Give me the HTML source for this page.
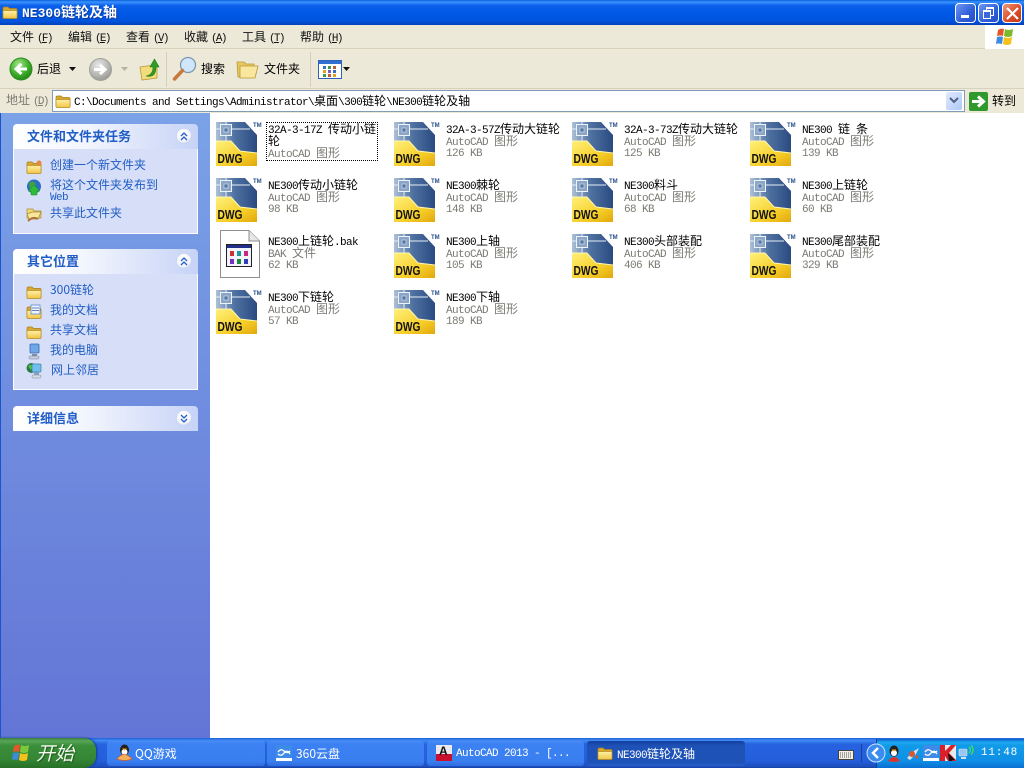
<!DOCTYPE html>
<html lang="zh"><head><meta charset="utf-8"><title>NE300链轮及轴</title>
<style>
html,body{margin:0;padding:0;width:1024px;height:768px;overflow:hidden;background:#fff}
body{position:relative;font:11px/12px "Liberation Mono","WenQuanYi Zen Hei","Noto Sans CJK SC",monospace;letter-spacing:-.6px;color:#000}
div,svg,span.a{position:absolute}
b.c,span.c{font:12px/12px "WenQuanYi Zen Hei","Noto Sans CJK SC",sans-serif;letter-spacing:0}
.s{white-space:nowrap}
.g{color:#7b7b74}
.t{white-space:nowrap;height:12px}
.k{margin-top:1px}
.m{top:31px;white-space:nowrap;color:#111}
.p{letter-spacing:-1.7px;margin-left:3px}
.lk{left:50px;color:#215dc6;white-space:nowrap;height:12px}
.hd{left:13px;width:185px;height:25px;border-radius:4px 4px 0 0;background:linear-gradient(90deg,#fff 0%,#f2f5fd 40%,#c6d3f7 100%)}
.hd b{position:absolute;left:14px;top:4px;font:bold 13px/15px "WenQuanYi Zen Hei","Noto Sans CJK SC",sans-serif;letter-spacing:0;color:#215dc6;white-space:nowrap}
.bd{left:13px;width:183px;background:#d6dff7;border:1px solid #fff;border-top:0}
.tb{top:741px;height:25px;width:158px;border-radius:3px;background:linear-gradient(180deg,#4a8cf6 0%,#3c81f3 12%,#3a7ff0 80%,#2f6de0 100%);color:#fff}
.tb .x{position:absolute;top:7px;white-space:nowrap;height:12px;color:#fff}
.wb{top:3px;width:19px;height:18px;border:1px solid #fff;border-radius:4px;box-sizing:content-box}
</style></head>
<body>
<svg width="0" height="0" style="left:0;top:0"><defs>
<linearGradient id="bl" x1="0" y1="0" x2="1" y2="0"><stop offset="0" stop-color="#aec0d6"/><stop offset=".45" stop-color="#4f72a2"/><stop offset="1" stop-color="#2a4a80"/></linearGradient>
<linearGradient id="ye" x1="0" y1="0" x2="1" y2="1"><stop offset="0" stop-color="#fff07a"/><stop offset=".6" stop-color="#f6cf2a"/><stop offset="1" stop-color="#e2a80c"/></linearGradient>
<linearGradient id="fo" x1="0" y1="0" x2="0" y2="1"><stop offset="0" stop-color="#fff2a8"/><stop offset="1" stop-color="#f0c444"/></linearGradient>
<radialGradient id="gr" cx=".4" cy=".3" r=".8"><stop offset="0" stop-color="#a5e68a"/><stop offset=".55" stop-color="#3fae2a"/><stop offset="1" stop-color="#1a7d12"/></radialGradient>
<radialGradient id="gy" cx=".4" cy=".3" r=".8"><stop offset="0" stop-color="#e8e8e8"/><stop offset=".6" stop-color="#b4b4b0"/><stop offset="1" stop-color="#8f8f8a"/></radialGradient>
<radialGradient id="cv" cx=".4" cy=".3" r=".8"><stop offset="0" stop-color="#fff"/><stop offset=".7" stop-color="#f2f4fb"/><stop offset="1" stop-color="#b8c6ee"/></radialGradient>
<symbol id="dwg" viewBox="0 0 46 46">
<path d="M0 1H29L41 14V45H0Z" fill="url(#bl)"/>
<path d="M0 20H15L24 30L41 32V45H0Z" fill="url(#ye)"/>
<path d="M0 20H15L24 30L41 32" fill="none" stroke="#fff6b0"/>
<path d="M0 8H34M10 0V20" stroke="#e6edf5" stroke-width="1" fill="none"/>
<rect x="4.500" y="3.500" width="11" height="11" fill="#8aa5c6" stroke="#eef3f8"/>
<rect x="8" y="7" width="4" height="4" fill="#5575a5" stroke="#dde6f0" stroke-width=".6"/>
</symbol>
<symbol id="fd" viewBox="0 0 16 16">
<path d="M1 4.500Q1 3 2.500 3H6L7.500 4.500H14Q15 4.500 15 5.500V13.500H1Z" fill="#d8a92f" stroke="#a77d1c" stroke-width=".7"/>
<path d="M1 6.500H15V13.500Q15 14.500 14 14.500H2Q1 14.500 1 13.500Z" fill="url(#fo)" stroke="#b68c26" stroke-width=".7"/>
</symbol>
<symbol id="tg" viewBox="0 0 16 16"><circle cx="8" cy="8" r="7.500" fill="url(#cv)" stroke="#c5d0ee" stroke-width=".6"/></symbol>
</defs></svg>

<!-- title bar -->
<div style="left:0;top:0;width:1024px;height:25px;background:linear-gradient(180deg,#0a5fd8 0%,#3a93ff 8%,#0a60ea 22%,#0058e6 55%,#0053dc 85%,#0340b8 100%)"></div>
<svg style="left:2px;top:4px" width="16" height="16"><use href="#fd"/></svg>
<div class="s" style="left:22px;top:5px;height:14px;color:#fff;font:bold 13px/14px 'Liberation Mono',monospace;letter-spacing:0;text-shadow:1px 1px 0 #0f3a9c">NE300<b class="c" style="font:bold 14px/14px 'WenQuanYi Zen Hei','Noto Sans CJK SC',sans-serif">链轮及轴</b></div>
<div class="wb" style="left:955px;background:linear-gradient(135deg,#6f96f0,#2f5fd8 60%,#2350c8)"><div style="left:5px;top:11px;width:8px;height:3px;background:#fff"></div></div>
<div class="wb" style="left:978px;background:linear-gradient(135deg,#6f96f0,#2f5fd8 60%,#2350c8)"><div style="left:7px;top:3px;width:6px;height:6px;border:1.500px solid #fff;border-top-width:2px"></div><div style="left:4px;top:6px;width:6px;height:6px;border:1.500px solid #fff;border-top-width:2px;background:#3a68dc"></div></div>
<div class="wb" style="left:1002px;width:18px;background:linear-gradient(135deg,#ec9a80,#dd4d2a 55%,#c23412)"><svg style="left:3px;top:3px" width="13" height="13"><path d="M1 1L12 12M12 1L1 12" stroke="#fff" stroke-width="2.200"/></svg></div>

<!-- menu -->
<div style="left:0;top:25px;width:1024px;height:24px;background:#ece9d8;border-bottom:1px solid #d8d2bd;box-sizing:border-box"></div>
<div class="m" style="left:10px"><span class="c">文件</span><span class="p">(<u>F</u>)</span></div>
<div class="m" style="left:68px"><span class="c">编辑</span><span class="p">(<u>E</u>)</span></div>
<div class="m" style="left:126px"><span class="c">查看</span><span class="p">(<u>V</u>)</span></div>
<div class="m" style="left:184px"><span class="c">收藏</span><span class="p">(<u>A</u>)</span></div>
<div class="m" style="left:242px"><span class="c">工具</span><span class="p">(<u>T</u>)</span></div>
<div class="m" style="left:300px"><span class="c">帮助</span><span class="p">(<u>H</u>)</span></div>
<div style="left:985px;top:25px;width:39px;height:24px;background:#fff"></div>
<svg style="left:995px;top:27px" width="20" height="20"><path d="M3 3Q6 1 9 2L8 9Q5 8 2 9Z" fill="#e5552a"/><path d="M10 2Q13 4 18 2L17 9Q13 11 9 9Z" fill="#7cb82c"/><path d="M2 10Q5 9 8 10L7 17Q4 16 1 17Z" fill="#3c8be0"/><path d="M9 10Q13 12 17 10L16 17Q12 19 8 17Z" fill="#f5c21b"/></svg>

<!-- toolbar -->
<div style="left:0;top:49px;width:1024px;height:40px;background:#ece9d8;border-bottom:1px solid #d8d2bd;box-sizing:border-box"></div>
<svg style="left:9px;top:57px" width="24" height="24"><circle cx="12" cy="12" r="11" fill="url(#gr)" stroke="#2a8c1e"/><path d="M18 12H9M12.500 7L7 12L12.500 17" stroke="#fff" stroke-width="3" fill="none"/></svg>
<div class="t" style="left:37px;top:63px"><span class="c">后退</span></div>
<svg style="left:69px;top:67px" width="8" height="5"><path d="M0 0H7L3.500 4Z" fill="#111"/></svg>
<svg style="left:89px;top:58px" width="23" height="23"><circle cx="11.500" cy="11.500" r="11" fill="url(#gy)" stroke="#a0a09b"/><path d="M5 11.500H14M11 7L16 11.500L11 16" stroke="#fff" stroke-width="3" fill="none"/></svg>
<svg style="left:121px;top:67px" width="8" height="5"><path d="M0 0H7L3.500 4Z" fill="#b5b3a7"/></svg>
<svg style="left:139px;top:57px" width="21" height="24"><path d="M1 10L8 9L18 8V21L3 23Z" fill="#f3dc7c" stroke="#b89a35" stroke-width=".8"/><path d="M7 19Q14 18 14 10H11L15.500 2L20 10H17Q17 21 7 19Z" fill="#2f9c25" stroke="#1e7a17" stroke-width=".6"/></svg>
<div style="left:166px;top:52px;width:1px;height:35px;background:#d3cfbc"></div>
<svg style="left:172px;top:56px" width="25" height="26"><circle cx="16" cy="9" r="7.500" fill="#cfe6fb" stroke="#7f96ad" stroke-width="1.300"/><path d="M10.500 14.500L2.500 23" stroke="#c8793e" stroke-width="3.500" stroke-linecap="round"/></svg>
<div class="t" style="left:201px;top:63px"><span class="c">搜索</span></div>
<svg style="left:236px;top:59px" width="23" height="21"><path d="M1 3H8L10 5H18V18H2Z" fill="#e9c862" stroke="#b89630" stroke-width=".8"/><path d="M4 7H22L19 19H4Z" fill="#f9e7a0" stroke="#b89630" stroke-width=".8"/></svg>
<div class="t" style="left:264px;top:63px"><span class="c">文件夹</span></div>
<div style="left:310px;top:52px;width:1px;height:35px;background:#d3cfbc"></div>
<svg style="left:318px;top:60px" width="24" height="19"><rect x=".5" y=".5" width="23" height="18" fill="#fff" stroke="#2c62b8"/><rect x="1" y="1" width="22" height="3" fill="#2f6fd0"/><g fill="#3c6fc2"><rect x="5" y="6" width="3" height="3"/></g><rect x="10" y="6" width="3" height="3" fill="#3c9c3c"/><rect x="15" y="6" width="3" height="3" fill="#c25a3c"/><rect x="5" y="10" width="3" height="3" fill="#e0a020"/><rect x="10" y="10" width="3" height="3" fill="#7a5cc0"/><rect x="15" y="10" width="3" height="3" fill="#3c6fc2"/><rect x="5" y="14" width="3" height="3" fill="#3c9c3c"/><rect x="10" y="14" width="3" height="3" fill="#c25a3c"/><rect x="15" y="14" width="3" height="3" fill="#e0a020"/></svg>
<svg style="left:343px;top:67px" width="8" height="5"><path d="M0 0H7L3.500 4Z" fill="#111"/></svg>

<!-- address -->
<div style="left:0;top:89px;width:1024px;height:24px;background:#ece9d8"></div>
<div class="t g" style="left:6px;top:94px;color:#7c7c72"><span class="c">地址</span><span class="p">(<u>D</u>)</span></div>
<div style="left:52px;top:90px;width:911px;height:20px;background:#fff;border:1px solid #7f9db9"></div>
<svg style="left:55px;top:93px" width="16" height="16"><use href="#fd"/></svg>
<div class="s" style="left:74px;top:95px;height:12px">C:\Documents and Settings\Administrator\<span class="c">桌面</span>\300<span class="c">链轮</span>\NE300<span class="c">链轮及轴</span></div>
<div style="left:946px;top:92px;width:16px;height:18px;border-radius:2px;background:linear-gradient(135deg,#e1eafe,#aec8f7)"><svg style="left:3px;top:5px" width="10" height="8"><path d="M1 1L5 5L9 1" fill="none" stroke="#4d6185" stroke-width="2"/></svg></div>
<svg style="left:969px;top:92px" width="19" height="19"><rect width="19" height="19" rx="2" fill="#2f9a2b"/><path d="M3 9.500H12M9 4.500L14.500 9.500L9 14.500" stroke="#fff" stroke-width="3" fill="none"/></svg>
<div class="t" style="left:992px;top:95px"><span class="c">转到</span></div>

<!-- sidebar -->
<div style="left:0;top:113px;width:210px;height:625px;background:linear-gradient(180deg,#7ba2e7 0%,#6375d6 100%)"></div>
<div style="left:0;top:113px;width:1px;height:625px;background:#1a55cc"></div>

<div class="hd" style="top:124px"><b>文件和文件夹任务</b></div>
<svg style="left:176px;top:128px" width="16" height="16"><use href="#tg"/><path d="M5 8L8 5L11 8M5 12L8 9L11 12" fill="none" stroke="#215dc6" stroke-width="1.300"/></svg>
<div class="bd" style="top:149px;height:84px"></div>
<svg style="left:26px;top:159px" width="16" height="16"><use href="#fd"/><circle cx="13" cy="4" r="2.500" fill="#e8873a"/></svg>
<div class="lk" style="top:159px"><span class="c">创建一个新文件夹</span></div>
<svg style="left:26px;top:179px" width="16" height="17"><circle cx="8" cy="7.500" r="7" fill="#2b6fc0"/><path d="M3 4Q7 1 9 4T4 10Z" fill="#3fa53a"/><path d="M8 6L14 12H11V16H5V12H2Z" fill="#2fbb3a" stroke="#1c8a24" stroke-width=".5"/></svg>
<div class="lk" style="top:179px"><span class="c">将这个文件夹发布到</span></div>
<div class="lk" style="top:192px">Web</div>
<svg style="left:26px;top:206px" width="16" height="16"><path d="M1 3H7L8 5H15V12H1Z" fill="#f3d874" stroke="#a88a30" stroke-width=".7"/><path d="M1 8L6 6H15L12 13H3Z" fill="#f8e69a" stroke="#a88a30" stroke-width=".7"/><path d="M2 15Q7 10 12 13" stroke="#b07030" stroke-width="2" fill="none"/></svg>
<div class="lk" style="top:207px"><span class="c">共享此文件夹</span></div>

<div class="hd" style="top:249px"><b>其它位置</b></div>
<svg style="left:176px;top:253px" width="16" height="16"><use href="#tg"/><path d="M5 8L8 5L11 8M5 12L8 9L11 12" fill="none" stroke="#215dc6" stroke-width="1.300"/></svg>
<div class="bd" style="top:274px;height:115px"></div>
<svg style="left:26px;top:284px" width="16" height="16"><use href="#fd"/></svg>
<div class="lk" style="top:284px"><span class="c">300链轮</span></div>
<svg style="left:26px;top:304px" width="16" height="16"><use href="#fd"/><rect x="5" y="1" width="9" height="9" fill="#eef3fb" stroke="#5f86c4" stroke-width=".8"/><path d="M6 4H13M6 6.500H13" stroke="#5f86c4"/></svg>
<div class="lk" style="top:304px"><span class="c">我的文档</span></div>
<svg style="left:26px;top:324px" width="16" height="16"><use href="#fd"/></svg>
<div class="lk" style="top:324px"><span class="c">共享文档</span></div>
<svg style="left:26px;top:343px" width="16" height="17"><rect x="4" y="1" width="9" height="9" rx="1" fill="#6fa8e8" stroke="#3b66b0" stroke-width=".8"/><path d="M6 11H11V13H6Z" fill="#7b8aa8"/><rect x="3" y="13" width="10" height="3" rx="1" fill="#c5cbdc" stroke="#7a86a3" stroke-width=".5"/></svg>
<div class="lk" style="top:344px"><span class="c">我的电脑</span></div>
<svg style="left:26px;top:362px" width="17" height="17"><circle cx="5.500" cy="6" r="5" fill="#2b7a4a"/><path d="M2 4Q5 2 7 4L5 8Z" fill="#55c040"/><rect x="6" y="2" width="9" height="8" rx="1" fill="#6fc0ea" stroke="#3b7fb0" stroke-width=".7"/><path d="M8 10.500H13V13H8Z" fill="#8fa3bb"/><rect x="6" y="13" width="9" height="3" rx="1" fill="#d5dae5" stroke="#7a86a3" stroke-width=".5"/></svg>
<div class="lk" style="top:364px;left:51px"><span class="c">网上邻居</span></div>

<div class="hd" style="top:406px"><b>详细信息</b></div>
<svg style="left:176px;top:410px" width="16" height="16"><use href="#tg"/><path d="M5 5L8 8L11 5M5 9L8 12L11 9" fill="none" stroke="#215dc6" stroke-width="1.300"/></svg>

<!-- files column 1 -->
<svg style="left:216px;top:121px" width="47" height="46"><use href="#dwg" width="46" height="46"/><text x="1.500" y="42" font-family="Liberation Sans" font-weight="bold" font-size="13" letter-spacing="0" textLength="25" lengthAdjust="spacingAndGlyphs" fill="#111">DWG</text><text x="37" y="6" font-family="Liberation Sans" font-weight="bold" font-size="6" letter-spacing="0" fill="#27508a">TM</text></svg>
<div style="left:266px;top:122px;width:110px;height:37px;border:1px dotted #000"></div>
<div class="t" style="left:268px;top:123px">32A-3-17Z <span class="c">传动小链</span></div>
<div class="t" style="left:268px;top:135px"><span class="c">轮</span></div>
<div class="t g" style="left:268px;top:147px">AutoCAD <span class="c">图形</span></div>

<svg style="left:216px;top:177px" width="47" height="46"><use href="#dwg" width="46" height="46"/><text x="1.500" y="42" font-family="Liberation Sans" font-weight="bold" font-size="13" letter-spacing="0" textLength="25" lengthAdjust="spacingAndGlyphs" fill="#111">DWG</text><text x="37" y="6" font-family="Liberation Sans" font-weight="bold" font-size="6" letter-spacing="0" fill="#27508a">TM</text></svg>
<div class="t" style="left:268px;top:179px">NE300<span class="c">传动小链轮</span></div>
<div class="t g" style="left:268px;top:191px">AutoCAD <span class="c">图形</span></div>
<div class="t g k" style="left:268px;top:203px">98 KB</div>

<svg style="left:219px;top:230px" width="42" height="49"><path d="M1.500 .5H30L40.500 11V47.500H1.500Z" fill="#fff" stroke="#8d8d8d"/><path d="M30 .5V11H40.500" fill="#e6e6e6" stroke="#8d8d8d"/><rect x="7.500" y="14.500" width="25" height="22" fill="#f3f3fb" stroke="#222"/><rect x="8" y="15" width="24" height="3" fill="#1f2f8a"/><g><rect x="11" y="21" width="4" height="5" fill="#c33"/><rect x="18" y="21" width="4" height="5" fill="#1a9a9a"/><rect x="25" y="21" width="4" height="5" fill="#c3288a"/><rect x="11" y="29" width="4" height="5" fill="#7a2fc3"/><rect x="18" y="29" width="4" height="5" fill="#1a8a3a"/><rect x="25" y="29" width="4" height="5" fill="#2a3fb8"/></g></svg>
<div class="t" style="left:268px;top:235px">NE300<span class="c">上链轮</span>.bak</div>
<div class="t g" style="left:268px;top:247px">BAK <span class="c">文件</span></div>
<div class="t g k" style="left:268px;top:259px">62 KB</div>

<svg style="left:216px;top:289px" width="47" height="46"><use href="#dwg" width="46" height="46"/><text x="1.500" y="42" font-family="Liberation Sans" font-weight="bold" font-size="13" letter-spacing="0" textLength="25" lengthAdjust="spacingAndGlyphs" fill="#111">DWG</text><text x="37" y="6" font-family="Liberation Sans" font-weight="bold" font-size="6" letter-spacing="0" fill="#27508a">TM</text></svg>
<div class="t" style="left:268px;top:291px">NE300<span class="c">下链轮</span></div>
<div class="t g" style="left:268px;top:303px">AutoCAD <span class="c">图形</span></div>
<div class="t g k" style="left:268px;top:315px">57 KB</div>

<!-- column 2 -->
<svg style="left:394px;top:121px" width="47" height="46"><use href="#dwg" width="46" height="46"/><text x="1.500" y="42" font-family="Liberation Sans" font-weight="bold" font-size="13" letter-spacing="0" textLength="25" lengthAdjust="spacingAndGlyphs" fill="#111">DWG</text><text x="37" y="6" font-family="Liberation Sans" font-weight="bold" font-size="6" letter-spacing="0" fill="#27508a">TM</text></svg>
<div class="t" style="left:446px;top:123px">32A-3-57Z<span class="c">传动大链轮</span></div>
<div class="t g" style="left:446px;top:135px">AutoCAD <span class="c">图形</span></div>
<div class="t g k" style="left:446px;top:147px">126 KB</div>

<svg style="left:394px;top:177px" width="47" height="46"><use href="#dwg" width="46" height="46"/><text x="1.500" y="42" font-family="Liberation Sans" font-weight="bold" font-size="13" letter-spacing="0" textLength="25" lengthAdjust="spacingAndGlyphs" fill="#111">DWG</text><text x="37" y="6" font-family="Liberation Sans" font-weight="bold" font-size="6" letter-spacing="0" fill="#27508a">TM</text></svg>
<div class="t" style="left:446px;top:179px">NE300<span class="c">棘轮</span></div>
<div class="t g" style="left:446px;top:191px">AutoCAD <span class="c">图形</span></div>
<div class="t g k" style="left:446px;top:203px">148 KB</div>

<svg style="left:394px;top:233px" width="47" height="46"><use href="#dwg" width="46" height="46"/><text x="1.500" y="42" font-family="Liberation Sans" font-weight="bold" font-size="13" letter-spacing="0" textLength="25" lengthAdjust="spacingAndGlyphs" fill="#111">DWG</text><text x="37" y="6" font-family="Liberation Sans" font-weight="bold" font-size="6" letter-spacing="0" fill="#27508a">TM</text></svg>
<div class="t" style="left:446px;top:235px">NE300<span class="c">上轴</span></div>
<div class="t g" style="left:446px;top:247px">AutoCAD <span class="c">图形</span></div>
<div class="t g k" style="left:446px;top:259px">105 KB</div>

<svg style="left:394px;top:289px" width="47" height="46"><use href="#dwg" width="46" height="46"/><text x="1.500" y="42" font-family="Liberation Sans" font-weight="bold" font-size="13" letter-spacing="0" textLength="25" lengthAdjust="spacingAndGlyphs" fill="#111">DWG</text><text x="37" y="6" font-family="Liberation Sans" font-weight="bold" font-size="6" letter-spacing="0" fill="#27508a">TM</text></svg>
<div class="t" style="left:446px;top:291px">NE300<span class="c">下轴</span></div>
<div class="t g" style="left:446px;top:303px">AutoCAD <span class="c">图形</span></div>
<div class="t g k" style="left:446px;top:315px">189 KB</div>

<!-- column 3 -->
<svg style="left:572px;top:121px" width="47" height="46"><use href="#dwg" width="46" height="46"/><text x="1.500" y="42" font-family="Liberation Sans" font-weight="bold" font-size="13" letter-spacing="0" textLength="25" lengthAdjust="spacingAndGlyphs" fill="#111">DWG</text><text x="37" y="6" font-family="Liberation Sans" font-weight="bold" font-size="6" letter-spacing="0" fill="#27508a">TM</text></svg>
<div class="t" style="left:624px;top:123px">32A-3-73Z<span class="c">传动大链轮</span></div>
<div class="t g" style="left:624px;top:135px">AutoCAD <span class="c">图形</span></div>
<div class="t g k" style="left:624px;top:147px">125 KB</div>

<svg style="left:572px;top:177px" width="47" height="46"><use href="#dwg" width="46" height="46"/><text x="1.500" y="42" font-family="Liberation Sans" font-weight="bold" font-size="13" letter-spacing="0" textLength="25" lengthAdjust="spacingAndGlyphs" fill="#111">DWG</text><text x="37" y="6" font-family="Liberation Sans" font-weight="bold" font-size="6" letter-spacing="0" fill="#27508a">TM</text></svg>
<div class="t" style="left:624px;top:179px">NE300<span class="c">料斗</span></div>
<div class="t g" style="left:624px;top:191px">AutoCAD <span class="c">图形</span></div>
<div class="t g k" style="left:624px;top:203px">68 KB</div>

<svg style="left:572px;top:233px" width="47" height="46"><use href="#dwg" width="46" height="46"/><text x="1.500" y="42" font-family="Liberation Sans" font-weight="bold" font-size="13" letter-spacing="0" textLength="25" lengthAdjust="spacingAndGlyphs" fill="#111">DWG</text><text x="37" y="6" font-family="Liberation Sans" font-weight="bold" font-size="6" letter-spacing="0" fill="#27508a">TM</text></svg>
<div class="t" style="left:624px;top:235px">NE300<span class="c">头部装配</span></div>
<div class="t g" style="left:624px;top:247px">AutoCAD <span class="c">图形</span></div>
<div class="t g k" style="left:624px;top:259px">406 KB</div>

<!-- column 4 -->
<svg style="left:750px;top:121px" width="47" height="46"><use href="#dwg" width="46" height="46"/><text x="1.500" y="42" font-family="Liberation Sans" font-weight="bold" font-size="13" letter-spacing="0" textLength="25" lengthAdjust="spacingAndGlyphs" fill="#111">DWG</text><text x="37" y="6" font-family="Liberation Sans" font-weight="bold" font-size="6" letter-spacing="0" fill="#27508a">TM</text></svg>
<div class="t" style="left:802px;top:123px">NE300 <span class="c">链</span> <span class="c">条</span></div>
<div class="t g" style="left:802px;top:135px">AutoCAD <span class="c">图形</span></div>
<div class="t g k" style="left:802px;top:147px">139 KB</div>

<svg style="left:750px;top:177px" width="47" height="46"><use href="#dwg" width="46" height="46"/><text x="1.500" y="42" font-family="Liberation Sans" font-weight="bold" font-size="13" letter-spacing="0" textLength="25" lengthAdjust="spacingAndGlyphs" fill="#111">DWG</text><text x="37" y="6" font-family="Liberation Sans" font-weight="bold" font-size="6" letter-spacing="0" fill="#27508a">TM</text></svg>
<div class="t" style="left:802px;top:179px">NE300<span class="c">上链轮</span></div>
<div class="t g" style="left:802px;top:191px">AutoCAD <span class="c">图形</span></div>
<div class="t g k" style="left:802px;top:203px">60 KB</div>

<svg style="left:750px;top:233px" width="47" height="46"><use href="#dwg" width="46" height="46"/><text x="1.500" y="42" font-family="Liberation Sans" font-weight="bold" font-size="13" letter-spacing="0" textLength="25" lengthAdjust="spacingAndGlyphs" fill="#111">DWG</text><text x="37" y="6" font-family="Liberation Sans" font-weight="bold" font-size="6" letter-spacing="0" fill="#27508a">TM</text></svg>
<div class="t" style="left:802px;top:235px">NE300<span class="c">尾部装配</span></div>
<div class="t g" style="left:802px;top:247px">AutoCAD <span class="c">图形</span></div>
<div class="t g k" style="left:802px;top:259px">329 KB</div>

<!-- taskbar -->
<div style="left:0;top:738px;width:1024px;height:30px;background:linear-gradient(180deg,#1f5fd8 0%,#3f8cf3 8%,#2663e0 20%,#245edb 75%,#1d4fc0 95%,#173fa0 100%)"></div>
<div style="left:0;top:738px;width:96px;height:30px;border-radius:0 12px 12px 0;background:linear-gradient(180deg,#3a7f3a 0%,#58a558 10%,#3a8f3a 25%,#358635 70%,#267026 100%);box-shadow:1px 0 2px #123a8a"></div>
<svg style="left:11px;top:744px" width="20" height="19"><path d="M3 2Q6 0 9 1L8 8Q5 7 2 8Z" fill="#e5552a"/><path d="M10 1Q13 3 18 1L17 8Q13 10 9 8Z" fill="#7cc83c"/><path d="M2 9Q5 8 8 9L7 16Q4 15 1 16Z" fill="#3c8be0"/><path d="M9 9Q13 11 17 9L16 16Q12 18 8 16Z" fill="#f5c21b"/></svg>
<div class="s" style="left:36px;top:742px;height:21px;color:#f4f8ee;font:italic 19px/21px 'WenQuanYi Zen Hei','Noto Sans CJK SC',sans-serif;letter-spacing:0;text-shadow:1px 1px 1px #1c5c1c">开始</div>

<div class="tb" style="left:107px"><svg style="left:9px;top:3px" width="17" height="18"><ellipse cx="8.500" cy="6" rx="4.500" ry="5.500" fill="#222"/><ellipse cx="8.500" cy="8" rx="3" ry="3" fill="#fff"/><path d="M6 4.500H11L8.500 6.500Z" fill="#f2a11d"/><path d="M1 15Q8 6 16 15Q8 18 1 15Z" fill="#f2b25a" stroke="#d8582a" stroke-width=".7"/></svg><div class="x" style="left:28px"><span class="c">QQ游戏</span></div></div>
<div class="tb" style="left:267px;width:157px"><svg style="left:9px;top:4px" width="16" height="16"><rect width="16" height="16" fill="#fff"/><rect width="16" height="13" fill="#3d8ae8"/><path d="M2 7Q5 3 8 6T14 6M2 9Q5 12 8 8T14 9" fill="none" stroke="#fff" stroke-width="1.300"/></svg><div class="x" style="left:29px"><span class="c">360云盘</span></div></div>
<div class="tb" style="left:427px;width:157px"><svg style="left:9px;top:4px" width="16" height="16"><rect width="16" height="9" fill="#e9e9ee"/><rect y="9" width="16" height="7" fill="#c8102e"/><text x="3" y="10" font-family="Liberation Sans" font-weight="bold" font-size="12" letter-spacing="0" fill="#111">A</text></svg><div class="x" style="left:29px">AutoCAD 2013 - [...</div></div>
<div class="tb" style="left:587px;background:linear-gradient(180deg,#14409f,#1e52b7 20%,#1e52b7 85%,#2a60c8)"><svg style="left:10px;top:4px" width="16" height="16"><use href="#fd"/></svg><div class="x" style="left:30px">NE300<span class="c">链轮及轴</span></div></div>

<svg style="left:838px;top:748px" width="16" height="12"><rect x=".5" y="2.500" width="15" height="9" fill="#f3efe4" stroke="#444"/><path d="M2 5H14M2 7H14M2 9H14" stroke="#555" stroke-dasharray="1 1"/></svg>
<div style="left:861px;top:744px;width:1px;height:18px;background:#1a3f98"></div>
<div style="left:876px;top:739px;width:148px;height:29px;background:linear-gradient(180deg,#0c5fcb 0%,#1fa8f2 12%,#109be8 22%,#0f8fe6 75%,#0a6fd0 100%);border-left:1px solid #0f3f9c"></div>
<svg style="left:866px;top:743px" width="20" height="20"><circle cx="10" cy="10" r="9" fill="#3a8cf0" stroke="#cfe4fb" stroke-width="1"/><path d="M12 5L7 10L12 15" stroke="#fff" stroke-width="2.500" fill="none"/></svg>
<svg style="left:886px;top:745px" width="16" height="18"><ellipse cx="8" cy="6" rx="4.500" ry="5.500" fill="#222"/><ellipse cx="8" cy="8" rx="3" ry="3" fill="#fff"/><path d="M5.500 4.500H10.500L8 6.500Z" fill="#f2a11d"/><path d="M2 16Q8 8 14 16Q8 18 2 16Z" fill="#d9352a"/></svg>
<svg style="left:905px;top:745px" width="16" height="16"><path d="M2 13L9 6L14 3L11 9L5 15Z" fill="#dbe3ea"/><circle cx="7" cy="9" r="3" fill="#d8552e"/><circle cx="12" cy="12" r="1.500" fill="#d8552e"/></svg>
<svg style="left:923px;top:745px" width="16" height="16"><rect width="16" height="16" fill="#fff"/><rect width="16" height="13" fill="#3d8ae8"/><path d="M2 7Q5 3 8 6T14 6M2 9Q5 12 8 8T14 9" fill="none" stroke="#fff" stroke-width="1.300"/></svg>
<svg style="left:940px;top:745px" width="16" height="16"><rect width="16" height="16" fill="#e8e8e8"/><path d="M0 0H5V6L11 0H16L9 8L16 15V16H8L5 11V16H0Z" fill="#d81f2a"/><path d="M8 8L15 15L11 15L13 16H9Z" fill="#111"/></svg>
<svg style="left:958px;top:744px" width="18" height="17"><rect x="1" y="5" width="8" height="7" rx="1" fill="#9cc6ee" stroke="#d9e7f7" stroke-width=".6"/><rect x="3" y="13" width="5" height="2" fill="#d5dfe9"/><path d="M11 3A4 4 0 0 1 11 9M13 1.500A6 6 0 0 1 13 10.500" fill="none" stroke="#4fe04f" stroke-width="1.200"/></svg>
<div class="s" style="left:981px;top:747px;height:12px;color:#fff;letter-spacing:.8px">11:48</div>
</body></html>
